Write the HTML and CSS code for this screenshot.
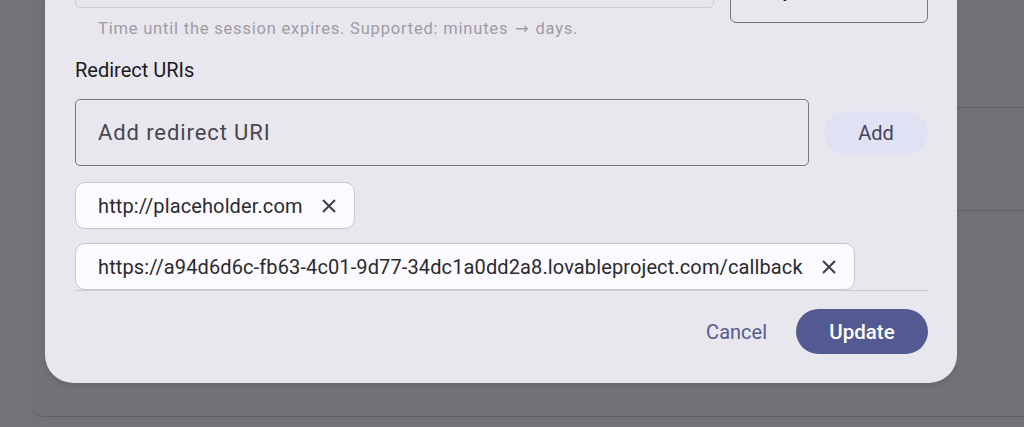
FILE: index.html
```html
<!DOCTYPE html>
<html lang="en">
<head>
    <meta charset="UTF-8">
    <meta name="viewport" content="width=device-width, initial-scale=1.0">
    <title>Edit client</title>
    <link rel="stylesheet" href="styles.css">
</head>
<body>
    <!-- page behind the modal -->
    <div class="page">
        <div class="page-row"></div>
        <div class="page-row"></div>
        <div class="page-row last"></div>
    </div>

    <div class="dialog">
        <div class="duration-row">
            <div class="field">
                <div class="text-input"></div>
                <p class="helper">Time until the session expires. Supported: minutes <span class="arrow">→</span> days.</p>
            </div>
            <div class="select-box">Days</div>
        </div>

        <h3 class="section-label">Redirect URIs</h3>

        <div class="add-row">
            <div class="uri-input">Add redirect URI</div>
            <button class="add-btn">Add</button>
        </div>

        <div class="chips">
            <div class="chip">
                <span>http://placeholder.com</span>
                <svg class="chip-x" viewBox="0 0 14 14" width="14" height="14"><path d="M1 1 L13 13 M13 1 L1 13"/></svg>
            </div>
            <div class="chip">
                <span>https://a94d6d6c-fb63-4c01-9d77-34dc1a0dd2a8.lovableproject.com/callback</span>
                <svg class="chip-x" viewBox="0 0 14 14" width="14" height="14"><path d="M1 1 L13 13 M13 1 L1 13"/></svg>
            </div>
        </div>

        <div class="actions">
            <button class="cancel-btn">Cancel</button>
            <button class="update-btn">Update</button>
        </div>
    </div>
</body>
</html>
```

FILE: styles.css
```css
body {
    margin: 0;
    height: 427px;
    overflow: hidden;
    background: #737277;
    font-family: Roboto, "Noto Sans", sans-serif;
    position: relative;
}

.page {
    position: absolute;
    left: 33px;
    right: -20px;
    top: 5px;
    border-bottom: 1px solid #5f5e63;
    border-radius: 0 0 0 10px;
    background: #727176;
}

.page-row {
    height: 102px;
    margin-left: 40px;
    border-bottom: 1px solid #616065;
}

.page-row.last {
    height: 205px;
    border-bottom: none;
}

.dialog {
    position: absolute;
    left: 45px;
    top: -81px;
    width: 912px;
    box-sizing: border-box;
    padding: 22px 29px 29px 30px;
    background: #e8e7ed;
    border-radius: 28px;
    box-shadow: 0 4px 4px rgba(0, 0, 0, 0.08);
}

.duration-row {
    display: grid;
    grid-template-columns: 1fr 198px;
    gap: 16px;
    align-items: start;
}

.text-input {
    height: 67px;
    box-sizing: border-box;
    border: 1px solid #cdcbd2;
    border-radius: 5px;
}

.helper {
    margin: 11px 0 0 23px;
    font-size: 16.5px;
    line-height: 20px;
    letter-spacing: 0.8px;
    color: #9e9ca4;
}

.arrow {
    font-family: "DejaVu Sans", sans-serif;
    font-size: 16px;
    letter-spacing: 0;
    margin: 0 2px;
}

.select-box {
    margin-top: 15px;
    height: 67px;
    box-sizing: border-box;
    border: 1px solid #76747b;
    border-radius: 6px;
    padding: 0 28px;
    display: flex;
    align-items: center;
    font-size: 20px;
    color: #1d1b20;
}

.section-label {
    margin: 20px 0 0;
    font-size: 20px;
    font-weight: 400;
    line-height: 22px;
    color: #1b1a1f;
}

.add-row {
    margin-top: 18px;
    display: flex;
    align-items: center;
    gap: 15px;
}

.uri-input {
    flex: 1;
    height: 67px;
    box-sizing: border-box;
    border: 1px solid #78767d;
    border-radius: 5px;
    padding-left: 22px;
    display: flex;
    align-items: center;
    font-size: 22px;
    letter-spacing: 0.9px;
    color: #48464e;
}

.add-btn {
    width: 104px;
    height: 44px;
    border: none;
    border-radius: 22px;
    background: #e1e1f4;
    font-family: inherit;
    font-size: 20px;
    color: #44465a;
}

.chips {
    margin-top: 16px;
    display: flex;
    flex-direction: column;
    align-items: flex-start;
    gap: 14px;
    border-bottom: 1px solid #cbc9d1;
}

.chip {
    height: 47px;
    box-sizing: border-box;
    display: flex;
    align-items: center;
    gap: 19px;
    padding: 0 18px 0 22px;
    background: #fbfafe;
    border: 1px solid #c9c7cf;
    border-radius: 10px;
    font-size: 20px;
    letter-spacing: 0.12px;
    color: #2b2a30;
}

.chip-x {
    stroke: #3f3e45;
    stroke-width: 2;
    fill: none;
}

.actions {
    margin-top: 18px;
    display: flex;
    justify-content: flex-end;
    align-items: center;
    gap: 29px;
}

.cancel-btn {
    border: none;
    background: none;
    padding: 0;
    font-family: inherit;
    font-size: 20px;
    color: #575b8c;
}

.update-btn {
    width: 132px;
    height: 45px;
    border: none;
    border-radius: 23px;
    background: #535a91;
    color: #fff;
    font-family: inherit;
    font-size: 20.5px;
    font-weight: 500;
}
```
